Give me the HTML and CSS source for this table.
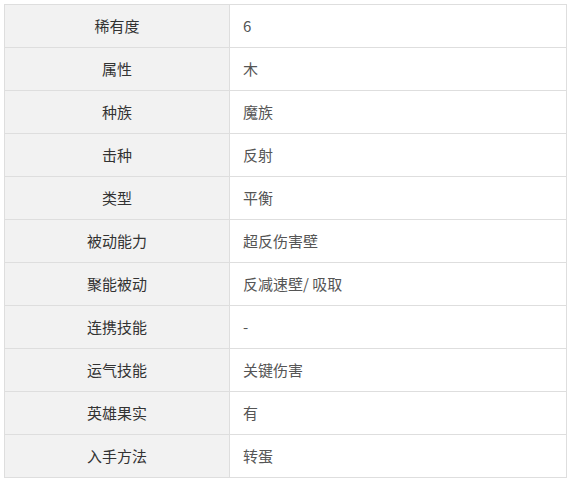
FILE: index.html
```html
<!DOCTYPE html>
<html lang="zh">
<head>
<meta charset="utf-8">
<link rel="stylesheet" href="styles.css">
</head>
<body>
<table class="info">
  <tr><th>稀有度</th><td>6</td></tr>
  <tr><th>属性</th><td>木</td></tr>
  <tr><th>种族</th><td>魔族</td></tr>
  <tr><th>击种</th><td>反射</td></tr>
  <tr><th>类型</th><td>平衡</td></tr>
  <tr><th>被动能力</th><td>超反伤害壁</td></tr>
  <tr><th>聚能被动</th><td>反减速壁/ 吸取</td></tr>
  <tr><th>连携技能</th><td>-</td></tr>
  <tr><th>运气技能</th><td>关键伤害</td></tr>
  <tr><th>英雄果实</th><td>有</td></tr>
  <tr><th>入手方法</th><td>转蛋</td></tr>
</table>
</body>
</html>
```
FILE: styles.css
```css
html, body {
  margin: 0;
  padding: 0;
  background: #fff;
}
body {
  padding: 4px;
  font-family: "Noto Sans CJK SC", "Noto Sans", sans-serif;
  font-size: 15px;
}
.info {
  border-collapse: collapse;
  width: 563px;
  table-layout: fixed;
}
.info th, .info td {
  border: 1px solid #dedede;
  height: 43px;
  padding: 0 0 2px 0;
  box-sizing: border-box;
}
.info th {
  width: 225px;
  background: #f2f2f2;
  color: #333;
  font-weight: normal;
  text-align: center;
}
.info td {
  color: #555;
  text-align: left;
  padding-left: 13px;
}
```
